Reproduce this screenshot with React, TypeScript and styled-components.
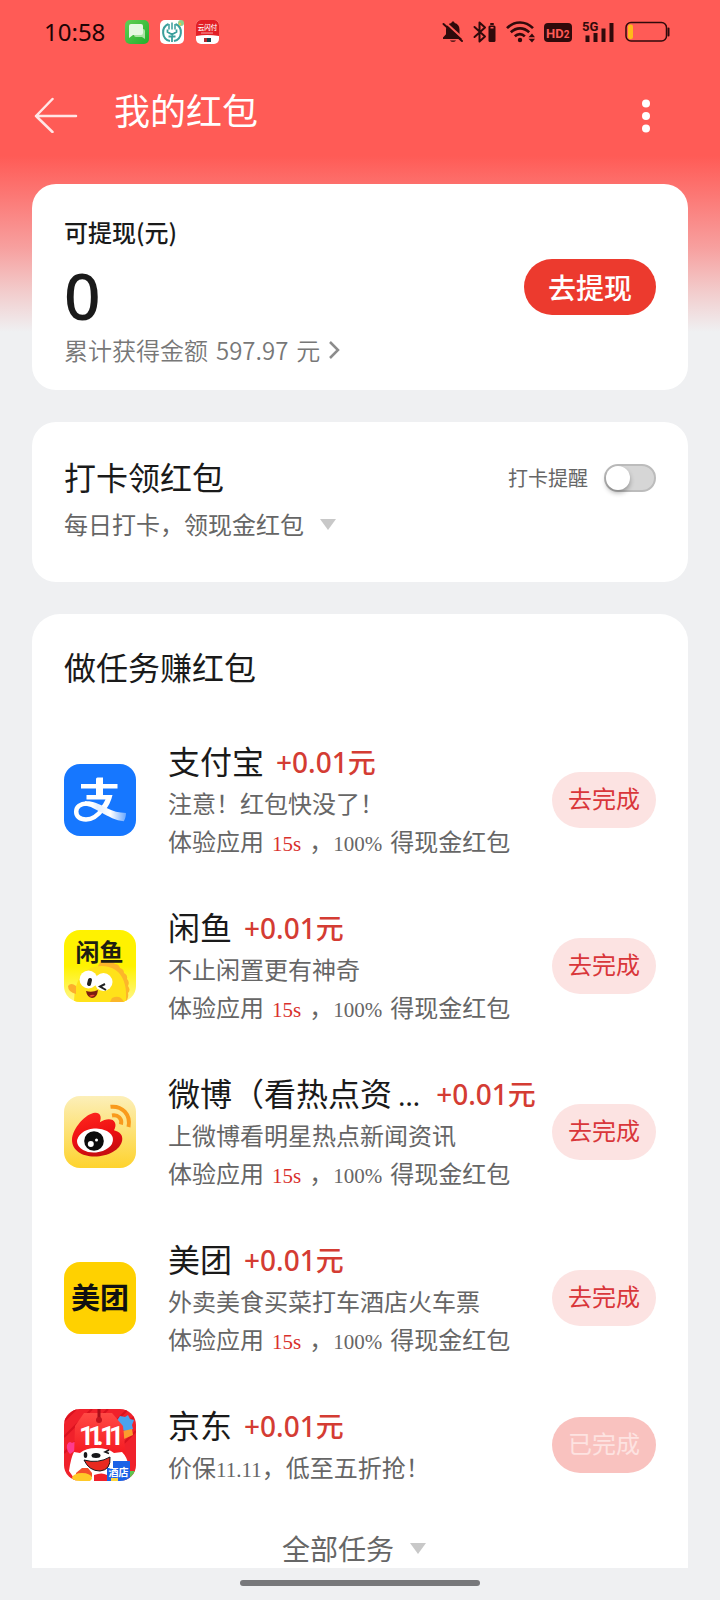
import React from "react";
import styled, { createGlobalStyle, css } from "styled-components";

const CJK = `"Noto Sans CJK SC", "Noto Sans", sans-serif`;
const MIXED = `"Noto Sans", "Noto Sans CJK SC", sans-serif`;
const BADGE = `Roboto, "Noto Sans CJK SC", sans-serif`;
const SERIF = `"Liberation Serif", "Noto Sans CJK SC", serif`;

const GlobalStyle = createGlobalStyle`
  *, *::before, *::after { box-sizing: border-box; }
  body { margin: 0; background: #eff0f2; }
  button { border: 0; padding: 0; background: none; font: inherit; color: inherit; cursor: pointer; }
  h1, h2, h3, p, ul { margin: 0; padding: 0; font-weight: inherit; }
  svg { display: block; flex: none; }
`;

const Page = styled.div`
  display: flex;
  flex-direction: column;
  min-height: 100vh;
  font-family: ${CJK};
  color: #1a1a1a;
  background: linear-gradient(
      #ff5b56 0,
      #ff5b56 156px,
      #fc7875 196px,
      #f7a09f 248px,
      #f2cccc 292px,
      #eff0f2 332px
    ) no-repeat #eff0f2;
`;

const StatusBar = styled.div`
  display: flex;
  align-items: center;
  justify-content: space-between;
  height: 64px;
  padding: 0 50px 0 44px;
`;

const StatusGroup = styled.div<{ $gap: number }>`
  display: flex;
  align-items: center;
  gap: ${(p) => p.$gap}px;
`;

const Clock = styled.time`
  margin-right: 9px;
  font: 400 24px/32px ${MIXED};
  color: #200405;
`;

const NavBar = styled.header`
  display: flex;
  align-items: center;
  height: 100px;
  padding: 0 56px 0 34px;
  color: #fff;
`;

const NavButton = styled.button`
  display: flex;
  align-items: center;
  justify-content: center;
`;

const PageTitle = styled.h1`
  flex: 1;
  padding: 0 0 10px 36px;
  font-size: 36px;
  line-height: 48px;
`;

const Content = styled.main`
  display: flex;
  flex: 1;
  flex-direction: column;
  gap: 32px;
  padding: 20px 32px 0;
`;

const Card = styled.section`
  border-radius: 24px;
  background: #fff;
`;

const BalanceCard = styled(Card)`
  display: flex;
  align-items: center;
  justify-content: space-between;
  padding: 0 32px;
`;

const BalanceInfo = styled.div`
  padding: 30px 0 22px;
`;

const BalanceLabel = styled.h2`
  font-size: 24px;
  font-weight: 500;
  line-height: 36px;
`;

const BalanceAmount = styled.p`
  margin: 14px 0 4px;
  font: 500 64px/64px ${MIXED};
`;

const HistoryLink = styled.a`
  display: flex;
  align-items: center;
  gap: 8px;
  font-size: 24px;
  font-weight: 350;
  line-height: 36px;
  color: #777;
  text-decoration: none;
`;

const WithdrawButton = styled.button`
  width: 132px;
  height: 56px;
  border-radius: 28px;
  background: #ec3a2e;
  color: #fff;
  font-size: 28px;
  font-weight: 500;
  line-height: 56px;
`;

const CheckinCard = styled(Card)`
  display: flex;
  flex-direction: column;
  gap: 6px;
  padding: 34px 32px 40px;
`;

const CardHead = styled.div`
  display: flex;
  align-items: center;
  justify-content: space-between;
`;

const CardTitle = styled.h2`
  padding-bottom: 4px;
  font-size: 32px;
  line-height: 40px;
`;

const Reminder = styled.label`
  display: flex;
  align-items: center;
  gap: 16px;
  font-size: 20px;
  line-height: 28px;
  color: #666;
`;

const Toggle = styled.input`
  appearance: none;
  width: 52px;
  height: 28px;
  margin: 0;
  padding: 0;
  border: 2px solid #bcbcbc;
  border-radius: 14px;
  background: #d6d6d6;
  cursor: pointer;

  &::before {
    content: "";
    display: block;
    width: 24px;
    height: 24px;
    border-radius: 50%;
    background: #fff;
    box-shadow: 0 3px 5px rgba(0, 0, 0, 0.3);
  }

  &:checked {
    border-color: #ec3a2e;
    background: #ec3a2e;
  }

  &:checked::before {
    margin-left: auto;
  }
`;

const Expander = styled.button<{ $large?: boolean }>`
  display: flex;
  align-items: center;
  align-self: ${(p) => (p.$large ? "center" : "flex-start")};
  gap: 16px;
  padding-right: ${(p) => (p.$large ? 12 : 0)}px;
  font-size: ${(p) => (p.$large ? 28 : 24)}px;
  line-height: ${(p) => (p.$large ? 40 : 36)}px;
  color: #666;
`;

const TaskCard = styled(Card)`
  display: flex;
  flex: 1;
  flex-direction: column;
  padding: 32px 32px 0;
  border-radius: 28px 28px 0 0;
`;

const TaskList = styled.ul`
  display: flex;
  flex-direction: column;
  gap: 46px;
  margin: 50px 0 42px;
  list-style: none;
`;

const TaskRow = styled.li`
  display: flex;
  align-items: center;
`;

const TaskBody = styled.div`
  flex: 1;
  min-width: 0;
  padding-left: 32px;
  white-space: nowrap;
`;

const TaskHead = styled.div`
  display: flex;
  gap: 12px;
  height: 44px;
  line-height: 44px;
`;

const TaskName = styled.h3`
  font-size: 32px;
  line-height: 40px;
`;

const Ellipsis = styled.span`
  margin: 0 4px 0 6px;
  font-family: ${MIXED};
  font-size: 28px;
  line-height: 1;
`;

const Reward = styled.span`
  font-family: ${MIXED};
  font-size: 28px;
  font-weight: 500;
  color: #d43c33;
`;

const TaskLine = styled.p`
  font-size: 24px;
  line-height: 38px;
  color: #666;
`;

const Latin = styled.span<{ $accent?: boolean; $spaced?: boolean }>`
  font-family: ${SERIF};
  font-size: 21px;
  line-height: 1;
  margin-right: ${(p) => (p.$spaced ? 8 : 0)}px;
  ${(p) =>
    p.$accent &&
    css`
      margin-left: 8px;
      color: #d9302c;
    `}
`;

const TaskButton = styled.button`
  flex: none;
  width: 104px;
  height: 56px;
  padding-bottom: 4px;
  border-radius: 28px;
  background: #fce3e2;
  color: #d9363a;
  font-size: 24px;
  line-height: 40px;

  &:disabled {
    background: #f9c2bf;
    color: #fde3e1;
    cursor: default;
  }
`;

const GestureArea = styled.footer`
  display: flex;
  justify-content: center;
  height: 32px;
  padding-top: 12px;
`;

const GestureBar = styled.div`
  width: 240px;
  height: 6px;
  border-radius: 3px;
  background: #77787b;
`;

const INK = "#300a0b";

const MessageIcon = () => (
  <svg width="24" height="24" viewBox="0 0 24 24" aria-hidden="true">
    <defs>
      <linearGradient id="msg" x1="0" y1="0" x2="1" y2="1">
        <stop offset="0" stopColor="#62cf55" />
        <stop offset="1" stopColor="#22b02c" />
      </linearGradient>
    </defs>
    <rect width="24" height="24" rx="5" fill="url(#msg)" />
    <path d="M9 9h9a2 2 0 0 1 2 2v8l-3-2h-6a2 2 0 0 1-2-2z" fill="#a9e4a3" />
    <path d="M6 4h10a2 2 0 0 1 2 2v7a2 2 0 0 1-2 2H8l-4 3V6a2 2 0 0 1 2-2z" fill="#e6f8e3" />
  </svg>
);

const BankIcon = () => (
  <svg width="24" height="24" viewBox="0 0 24 24" aria-hidden="true">
    <rect width="24" height="24" rx="5" fill="#fff" />
    <circle cx="21" cy="3" r="3" fill="#8fd08a" />
    <circle cx="20" cy="4" r="1.2" fill="#f3c44d" />
    <g fill="none" stroke="#3a9f9c">
      <path d="M8.500 4A9 9 0 0 0 10 21M15.500 4A9 9 0 0 1 14 21" strokeWidth="2" />
      <path d="M12 2.500v7M9 4v5.500M15 4v5.500" strokeWidth="1.500" />
      <path d="M7.500 9.500V12l4.500 2.500 4.500-2.500V9.500M12 13v9M8.500 16.500h7" strokeWidth="1.800" />
    </g>
  </svg>
);

const PayIcon = () => (
  <svg width="24" height="24" viewBox="0 0 24 24" aria-hidden="true">
    <rect x="1" width="23" height="24" rx="5" fill="#fff" />
    <path d="M6 0h13a5 5 0 0 1 5 5v11q-12-2-23 0V5a5 5 0 0 1 5-5z" fill="#e31f26" />
    <text x="12.500" y="10" fontSize="6.500" fontWeight="500" textAnchor="middle" fill="#fff" fontFamily={CJK}>云闪付</text>
    <path d="M6 13h12" stroke="#f7a3a3" />
    <rect x="9" y="18" width="3" height="4" fill="#b3282d" />
    <rect x="12" y="18" width="4" height="4" fill="#15464f" />
  </svg>
);

const MutedBellIcon = () => (
  <svg width="22" height="24" viewBox="0 0 22 24" aria-hidden="true">
    <path d="M11 1.500c1 0 1.600.6 1.600 1.500 3 .8 4.900 3 4.900 6.500v4.700l3 3.300v1.500H1v-1.500l3-3.300V9.500C4 6 6 3.800 9.400 3c0-.9.6-1.500 1.600-1.500zM8 20.500h6c-.8 1.700-5.200 1.700-6 0z" fill={INK} />
    <path d="M2.500 1.500 21.500 19" stroke="#ff5b56" strokeWidth="2" />
    <path d="M1.500 4 20 21" stroke={INK} strokeWidth="2" strokeLinecap="round" />
  </svg>
);

const BluetoothIcon = () => (
  <svg width="24" height="24" viewBox="0 0 24 24" aria-hidden="true">
    <path d="M1.500 7 12 16.500 6.500 21.500V2.500L12 7.500 1.500 17" fill="none" stroke={INK} strokeWidth="2" strokeLinejoin="round" strokeLinecap="round" />
    <rect x="15.500" y="5.500" width="7" height="16.500" rx="1.500" fill={INK} />
    <rect x="17" y="3" width="4" height="2" rx="1" fill={INK} />
    <rect x="17.500" y="7" width="3" height="1.500" fill="#ff5b56" />
  </svg>
);

const WifiIcon = () => (
  <svg width="29" height="24" viewBox="0 0 29 24" aria-hidden="true">
    <g fill="none" stroke={INK} strokeWidth="2.600">
      <path d="M1 8.200C8.500 0.500 19.500 0.500 27 8.200" />
      <path d="M4.800 12.300c5.500-5.300 13-5.300 18.400 0" />
      <path d="M8.800 16.300c3-2.900 7.200-2.900 10 0" />
    </g>
    <circle cx="14" cy="20" r="2.200" fill={INK} />
    <path d="M22.500 17.200 26 13.500l3 3.700zM22.500 18.800 26 22.500l3-3.700z" fill={INK} />
  </svg>
);

const HdIcon = () => (
  <svg width="28" height="20" viewBox="0 0 28 20" aria-hidden="true">
    <rect y="1" width="28" height="19" rx="4" fill={INK} />
    <text x="2" y="15.500" fontSize="13" fontWeight="700" fill="#ff5b56" fontFamily={BADGE}>HD<tspan fontSize="10">2</tspan></text>
  </svg>
);

const SignalIcon = () => (
  <svg width="35" height="24" viewBox="-3 0 35 24" aria-hidden="true">
    <text x="-2" y="11" fontSize="13" fontWeight="700" fill={INK} fontFamily={BADGE}>5G</text>
    <path d="M3.500 15.500v6.500M11.500 13v9M19.500 8.500v13.500M27.500 3v19" stroke={INK} strokeWidth="4" />
  </svg>
);

const BatteryIcon = () => (
  <svg width="45" height="22" viewBox="0 0 45 22" aria-hidden="true">
    <rect x="1" y="1.500" width="40.500" height="18.500" rx="5" fill="none" stroke={INK} strokeWidth="1.500" />
    <rect x="3" y="3.500" width="5" height="14.500" rx="2" fill="#ffb91a" />
    <path d="M43.500 7.500v7" stroke={INK} strokeWidth="2" strokeLinecap="round" />
  </svg>
);

const BackIcon = () => (
  <svg width="44" height="38" viewBox="0 0 44 38" fill="none" stroke="#fff" strokeOpacity="0.85" strokeWidth="2.500" strokeLinecap="round" strokeLinejoin="round" aria-hidden="true">
    <path d="M18.500 4 2 21l16.500 16M2 21h40" />
  </svg>
);

const MoreIcon = () => (
  <svg width="36" height="40" viewBox="0 0 36 40" fill="#fff" aria-hidden="true">
    <circle cx="18" cy="9.500" r="4" />
    <circle cx="18" cy="22" r="4" />
    <circle cx="18" cy="34.500" r="4" />
  </svg>
);

const ChevronIcon = () => (
  <svg width="12" height="18" viewBox="0 0 12 18" fill="none" stroke="#8c8c8c" strokeWidth="2.500" aria-hidden="true">
    <path d="M2 1l8 8-8 8" />
  </svg>
);

const TriangleIcon = () => (
  <svg width="16" height="12" viewBox="0 0 16 12" aria-hidden="true">
    <path d="M0 1h16L8 12z" fill="#c8c8c8" />
  </svg>
);

const AlipayLogo = () => (
  <svg width="72" height="72" viewBox="0 0 72 72" aria-hidden="true">
    <defs>
      <linearGradient id="ribbon" x1="10" y1="0" x2="62" y2="0" gradientUnits="userSpaceOnUse">
        <stop offset="0" stopColor="#fff" />
        <stop offset="0.35" stopColor="#fff" />
        <stop offset="0.45" stopColor="#e3efff" />
        <stop offset="0.7" stopColor="#fff" />
        <stop offset="1" stopColor="#6aa8ff" />
      </linearGradient>
    </defs>
    <rect width="72" height="72" rx="16" fill="#1677ff" />
    <path d="M17 20h15v-5q0-1.500 1.500-1.500H39V20h14.500v4.500H39V31h9.500q-2 9-8 16l-5-3q4.500-4.500 6-8.500h-19V31H32v-6.500H17z" fill="#fff" />
    <path d="M39 44.500C34 51.500 28 55.500 22 55.500c-6.500 0-9.800-3.300-9.800-8 0-4.800 4.300-8 10.300-8" fill="none" stroke="#fff" strokeWidth="4.500" />
    <path d="M21 37.300c7-.6 13 2 21 6.500 7 3.600 13 5 20 5.300 0 3-.7 5.500-2.200 8.200-8-.8-15-4.500-22.800-9C31 45 26.500 42 21 41.700z" fill="url(#ribbon)" />
  </svg>
);

const XianyuLogo = () => (
  <svg width="72" height="72" viewBox="0 0 72 72" aria-hidden="true">
    <defs>
      <clipPath id="xyClip"><rect width="72" height="72" rx="16" /></clipPath>
      <linearGradient id="xyBg" x1="0" y1="0" x2="0" y2="1">
        <stop offset="0.5" stopColor="#fff200" />
        <stop offset="1" stopColor="#fff78a" />
      </linearGradient>
    </defs>
    <g clipPath="url(#xyClip)">
      <rect width="72" height="72" fill="url(#xyBg)" />
      <path d="M34 36q2-5 7-5 2 0 4 1 4-1 6 2 4 0 5 4 4 1 4 5 4 2 3 6 3 3 1 7 3 4 0 7 1 4-2 9H38z" fill="#fdb62a" />
      <path d="M10 74c0-20 6-38 28-38 17 0 24 14 24 28v10z" fill="#ffe21a" />
      <path d="M4 56q3-4 8 0v8q-8-2-8-8z" fill="#fcae2c" />
      <path d="M48 68q8-4 12 4H46z" fill="#fbb629" />
      <circle cx="24.500" cy="49.500" r="9" fill="#fff" />
      <circle cx="39.500" cy="52" r="9" fill="#fff" />
      <path d="M26 50l-1 4" stroke="#222" strokeWidth="4" strokeLinecap="round" />
      <path d="M41 54l-5 2.500 6 3.500" fill="none" stroke="#222" strokeWidth="2" />
      <path d="M22 61q6 2 12-1-1 8-6 8-5-1-6-7z" fill="#7b1d10" />
      <path d="M25 66q3-2 6-1-3 3-6 1z" fill="#ef4a34" />
      <text x="35.500" y="31" fontSize="24" fontWeight="700" textAnchor="middle" fill="#1e1e12" fontFamily={CJK}>闲鱼</text>
    </g>
  </svg>
);

const WeiboLogo = () => (
  <svg width="72" height="72" viewBox="0 0 72 72" aria-hidden="true">
    <defs>
      <linearGradient id="wbBg" x1="0" y1="0" x2="0" y2="1">
        <stop offset="0" stopColor="#fcefb9" />
        <stop offset="1" stopColor="#fed32e" />
      </linearGradient>
      <linearGradient id="wbRed" x1="0" y1="0" x2="0.3" y2="1">
        <stop offset="0" stopColor="#ff2a20" />
        <stop offset="0.6" stopColor="#ee0f12" />
        <stop offset="1" stopColor="#c90d10" />
      </linearGradient>
    </defs>
    <rect width="72" height="72" rx="16" fill="url(#wbBg)" />
    <path d="M8 44C8.500 32 22 17.500 31 16.800c5-.4 7 3.700 4.800 9.400 6.200-4 13.400-4 15.200.5 1.100 2.600.2 5-1 7.600 6 1.500 9 5 8.200 10C56.500 54 44 60.500 30.500 60.500 17.500 60.500 8 54 8 44z" fill="url(#wbRed)" />
    <ellipse cx="31" cy="44.500" rx="18" ry="12" fill="#fff" transform="rotate(-5 31 44.500)" />
    <circle cx="30" cy="45" r="9.800" fill="#0b0b0b" />
    <circle cx="26.800" cy="48" r="3" fill="#fff" />
    <circle cx="32.500" cy="44" r="1.500" fill="#fff" />
    <g fill="none" stroke="#f99a1c" strokeWidth="4">
      <path d="M46.500 10.800C58 9.500 67 18.500 64.500 31" />
      <path d="M48 19.500c6-1 10.500 3 9 9" />
    </g>
  </svg>
);

const MeituanLogo = () => (
  <svg width="72" height="72" viewBox="0 0 72 72" aria-hidden="true">
    <rect width="72" height="72" rx="16" fill="#ffd100" />
    <text x="36" y="47" fontSize="29" fontWeight="700" textAnchor="middle" fill="#111" fontFamily={CJK}>美团</text>
  </svg>
);

const JdLogo = () => (
  <svg width="72" height="72" viewBox="0 0 72 72" aria-hidden="true">
    <defs>
      <clipPath id="jdClip"><rect width="72" height="72" rx="16" /></clipPath>
      <linearGradient id="jdTag" x1="0" y1="0" x2="0" y2="1">
        <stop offset="0" stopColor="#ff4a45" />
        <stop offset="1" stopColor="#f4161f" />
      </linearGradient>
    </defs>
    <g clipPath="url(#jdClip)">
      <rect width="72" height="72" fill="#f0212b" />
      <path d="M0 12 12 0M0 28 28 0M0 44 44 0M44 20 64 0M50 28 72 6M58 36l14-14" stroke="#d9121f" strokeWidth="2" />
      <path d="M56 7l5 1 3-2 2 4 4 1-2 5 1 4-6 2-7-1-4-8z" fill="#4aa3ee" />
      <path d="M59 22l9-2 1 6-9 4z" fill="#fb9b2e" />
      <path d="M3 36q2-5 5-2 4-3 5 2 0 5-7 9-4-4-3-9z" fill="#ff3b8d" />
      <path d="M20 4h28l11 13 3 31H10l1-31z" fill="url(#jdTag)" />
      <path d="M35 0v11" stroke="#a80f1a" strokeWidth="3" />
      <circle cx="35" cy="11" r="3" fill="#c3141f" />
      <text x="15 24 32 36 45" y="36" fontSize="26" fontWeight="700" fill="#fff" fontFamily={BADGE}>11.11</text>
      <path d="M5 62q2-14 5-19l6 1q6-5 16-5 12 0 18 5l8-1q5 5 6 12l-3 17H12z" fill="#fff" />
      <ellipse cx="21.500" cy="46" rx="1.800" ry="3" fill="#17171a" />
      <ellipse cx="32" cy="46.500" rx="4.500" ry="2.500" fill="#17171a" />
      <path d="M45 41l-4 2 4 1.500" fill="none" stroke="#17171a" strokeWidth="1.500" />
      <path d="M20 51q14 4 26-3 1 13-10 14-11 0-16-11z" fill="#e92a20" stroke="#17171a" />
      <path d="M30 66q8-3 13 0v6H30z" fill="#f0212b" />
      <path d="M12 64l6-5h6l4 5v4H12z" fill="#f4502a" />
      <ellipse cx="18" cy="69" rx="10" ry="5" fill="#ffc928" />
      <path d="M49 52h17v20H43V59h6z" fill="#1b62e6" />
      <text x="54.500" y="67" fontSize="10" fontWeight="700" textAnchor="middle" fill="#fff" fontFamily={CJK}>酒店</text>
      <path d="M47 69h7v3h-7z" fill="#ffd53c" />
      <path d="M66 62h6v10h-6z" fill="#5fc44f" />
    </g>
  </svg>
);

interface Task {
  name: string;
  truncated?: boolean;
  detail: React.ReactNode;
  Logo: () => React.JSX.Element;
  done?: boolean;
}

const tasks: Task[] = [
  { name: "支付宝", detail: "注意！红包快没了！", Logo: AlipayLogo },
  { name: "闲鱼", detail: "不止闲置更有神奇", Logo: XianyuLogo },
  { name: "微博（看热点资", truncated: true, detail: "上微博看明星热点新闻资讯", Logo: WeiboLogo },
  { name: "美团", detail: "外卖美食买菜打车酒店火车票", Logo: MeituanLogo },
  { name: "京东", detail: <>价保<Latin>11.11</Latin>，低至五折抢！</>, Logo: JdLogo, done: true },
];

const TaskItem = ({ name, truncated, detail, Logo, done }: Task) => (
  <TaskRow>
    <Logo />
    <TaskBody>
      <TaskHead>
        <TaskName>
          {name}
          {truncated && <Ellipsis>…</Ellipsis>}
        </TaskName>
        <Reward>+0.01元</Reward>
      </TaskHead>
      <TaskLine>{detail}</TaskLine>
      {!done && (
        <TaskLine>
          体验应用<Latin $accent $spaced>15s</Latin>，<Latin $spaced>100%</Latin>得现金红包
        </TaskLine>
      )}
    </TaskBody>
    <TaskButton disabled={done}>{done ? "已完成" : "去完成"}</TaskButton>
  </TaskRow>
);

export default function App() {
  return (
    <>
      <GlobalStyle />
      <Page lang="zh-CN">
        <StatusBar>
          <StatusGroup $gap={11}>
            <Clock>10:58</Clock>
            <MessageIcon />
            <BankIcon />
            <PayIcon />
          </StatusGroup>
          <StatusGroup $gap={9}>
            <MutedBellIcon />
            <BluetoothIcon />
            <WifiIcon />
            <HdIcon />
            <SignalIcon />
            <BatteryIcon />
          </StatusGroup>
        </StatusBar>
        <NavBar>
          <NavButton aria-label="返回"><BackIcon /></NavButton>
          <PageTitle>我的红包</PageTitle>
          <NavButton aria-label="更多"><MoreIcon /></NavButton>
        </NavBar>
        <Content>
          <BalanceCard>
            <BalanceInfo>
              <BalanceLabel>可提现(元)</BalanceLabel>
              <BalanceAmount>0</BalanceAmount>
              <HistoryLink href="#history">
                <span>累计获得金额</span>
                <span>597.97</span>
                <span>元</span>
                <ChevronIcon />
              </HistoryLink>
            </BalanceInfo>
            <WithdrawButton>去提现</WithdrawButton>
          </BalanceCard>
          <CheckinCard>
            <CardHead>
              <CardTitle>打卡领红包</CardTitle>
              <Reminder>打卡提醒<Toggle type="checkbox" role="switch" /></Reminder>
            </CardHead>
            <Expander>每日打卡，领现金红包<TriangleIcon /></Expander>
          </CheckinCard>
          <TaskCard>
            <CardTitle>做任务赚红包</CardTitle>
            <TaskList>
              {tasks.map((task) => (
                <TaskItem key={task.name} {...task} />
              ))}
            </TaskList>
            <Expander $large>全部任务<TriangleIcon /></Expander>
          </TaskCard>
        </Content>
        <GestureArea><GestureBar /></GestureArea>
      </Page>
    </>
  );
}
